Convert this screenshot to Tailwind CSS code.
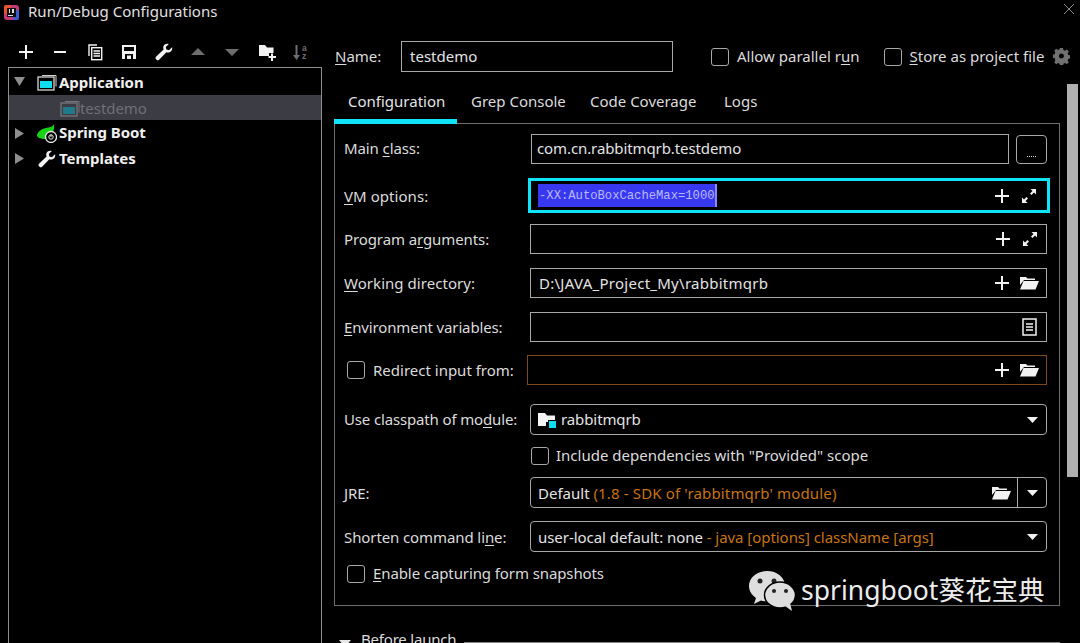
<!DOCTYPE html>
<html><head><meta charset="utf-8"><script src="https://cdn.jsdelivr.net/npm/@tailwindcss/browser@4"></script></head>
<body class="m-0 bg-black">
<div class="relative w-[1080px] h-[643px] overflow-hidden bg-black text-[#dcdcdc] text-[15px] leading-[20px] font-['Noto_Sans','Noto_Sans_CJK_SC',sans-serif]">
  <!-- title bar -->
  <div class="flex items-center h-[24px] pl-[4px]">
    <svg width="15" height="15" viewBox="0 0 15 15"><rect width="15" height="15" rx="3" fill="#c03a7a"/><rect x="0" y="0" width="7" height="9" rx="2" fill="#e8542a"/><rect x="9" y="5" width="6" height="10" rx="2" fill="#3a5ad0"/><rect x="3" y="3" width="9" height="9" fill="#111"/><rect x="4" y="10" width="5" height="1" fill="#ddd"/><rect x="5" y="4" width="1" height="4" fill="#ddd"/><rect x="8" y="4" width="2" height="4" fill="#ddd"/></svg>
    <span class="ml-[9px] text-[#e0e0e0] -translate-y-px tracking-[0.02px]">Run/Debug Configurations</span>
    <svg class="ml-auto mr-[5px] mt-[-6px]" width="12" height="12" viewBox="0 0 12 12" stroke="#8a8a8a" fill="none"><path d="M1 1L11 11M11 1L1 11"/></svg>
  </div>
  <div class="flex">
    <!-- left -->
    <div class="w-[334px] shrink-0 pl-[8px]">
      <div class="flex items-center h-[43px] pt-[12px] pl-[9px] gap-[16.4px]">
        <svg width="18" height="18" viewBox="0 0 18 18" fill="#f2f2f2"><path d="M8 2h2v6h6v2h-6v6H8v-6H2V8h6z"/></svg>
        <svg width="18" height="18" viewBox="0 0 18 18" fill="#f2f2f2"><path d="M3 8h12v2H3z"/></svg>
        <svg width="18" height="18" viewBox="0 0 18 18" fill="none" stroke="#f2f2f2" stroke-width="1.4"><path d="M3 13V2h8"/><rect x="5.7" y="4.7" width="10" height="12" fill="#000"/><path d="M7.5 8h6.5M7.5 10.5h6.5M7.5 13h6.5"/></svg>
        <svg width="18" height="18" viewBox="0 0 18 18" fill="#f2f2f2"><path d="M2 2h14v14H2z"/><rect x="4" y="4" width="10" height="4" fill="#000"/><rect x="5" y="11" width="8" height="5" fill="#000"/><rect x="7" y="12.500" width="4" height="3.500" fill="#f2f2f2"/></svg>
        <svg width="18" height="18" viewBox="0 0 18 18" fill="#f2f2f2"><path d="M17 4.200l-3 3-2.600-.6-.6-2.600 3-3c-2.400-.8-5 .3-5.500 2.800-.2 1-.1 1.900.3 2.700L1 13.800c-.6.7-.6 1.800.1 2.500l.5.500c.7.7 1.800.7 2.500 0l7.300-7.500c2.900 1 6.200-1 5.800-4.600z"/></svg>
        <svg width="18" height="18" viewBox="0 0 18 18" fill="#6e6e6e"><path d="M9 5l7 7H2z"/></svg>
        <svg width="18" height="18" viewBox="0 0 18 18" fill="#6e6e6e"><path d="M2 6h14l-7 7z"/></svg>
        <svg width="18" height="18" viewBox="0 0 18 18" fill="#f2f2f2"><path d="M1 2h6l2 2.500h6.500V10H11v3H1z"/><path d="M13 10.500h2v2.500h3v2h-3v3h-2v-3h-2.500v-2H13z"/></svg>
        <svg width="18" height="18" viewBox="0 0 18 18" fill="#6e6e6e"><path d="M3.500 2h2v10H8l-3.500 5L1 12h2.500z"/><text x="10" y="8" font-size="8.500" font-family="Liberation Sans" font-weight="700">a</text><text x="10" y="16" font-size="8.500" font-family="Liberation Sans" font-weight="700">z</text></svg>
      </div>
      <div class="w-[312px] h-[590px] border border-[#8e8e8e] font-bold text-[#f0f0f0] box-content tracking-[-0.05px]">
        <div class="flex items-center h-[27px]">
          <svg class="ml-[4px]" width="13" height="13" viewBox="0 0 13 13" fill="#8e8e8e"><path d="M1 2h11l-5.500 9z"/></svg>
          <svg class="ml-[11px]" width="20" height="18" viewBox="0 0 20 18"><path d="M5 2.500h14v11" fill="none" stroke="#cfcfcf"/><rect x="1" y="4" width="16" height="13" fill="#000" stroke="#d8d8d8" stroke-width="1.300"/><rect x="3" y="8" width="12" height="7" fill="#10dcf0"/></svg>
          <span class="ml-[2px]">Application</span>
        </div>
        <div class="flex items-center h-[25px] bg-[#3c3c44] font-normal text-[#6f6f76] pl-[51px]">
          <svg width="20" height="18" viewBox="0 0 20 18"><path d="M5 2.500h14v11" fill="none" stroke="#77777d"/><rect x="1" y="4" width="16" height="13" fill="#3c3c44" stroke="#77777d" stroke-width="1.300"/><rect x="3" y="8" width="12" height="7" fill="#1f7a8c"/></svg>
          <span>testdemo</span>
        </div>
        <div class="flex items-center h-[26px]">
          <svg class="ml-[4px]" width="13" height="13" viewBox="0 0 13 13" fill="#8e8e8e"><path d="M2 1l9 5.500-9 5.500z"/></svg>
          <svg class="ml-[11px]" width="20" height="20" viewBox="0 0 20 20"><path d="M0 13c0-4 4-7 9-8 3-.5 7-1 8-4 .5 4 0 8-3 10l-5 5c-4 0-7 0-9-3z" fill="#17d117"/><circle cx="14" cy="14" r="5.500" fill="#000" stroke="#e8e8e8" stroke-width="1.300"/><circle cx="14" cy="14" r="2.200" fill="none" stroke="#e8e8e8"/><path d="M14 11.500V14" stroke="#e8e8e8"/></svg>
          <span class="ml-[2px] -translate-y-px">Spring Boot</span>
        </div>
        <div class="flex items-center h-[25px]">
          <svg class="ml-[4px]" width="13" height="13" viewBox="0 0 13 13" fill="#8e8e8e"><path d="M2 1l9 5.500-9 5.500z"/></svg>
          <svg class="ml-[11px]" width="20" height="18" viewBox="0 0 18 18" fill="#f2f2f2"><path d="M17 4.200l-3 3-2.600-.6-.6-2.600 3-3c-2.400-.8-5 .3-5.500 2.800-.2 1-.1 1.900.3 2.700L1 13.800c-.6.7-.6 1.800.1 2.500l.5.500c.7.7 1.800.7 2.500 0l7.300-7.500c2.900 1 6.200-1 5.800-4.600z"/></svg>
          <span class="ml-[2px] -translate-y-px">Templates</span>
        </div>
      </div>
    </div>
    <!-- right -->
    <div class="w-[746px]">
      <div class="flex items-center h-[31px] mt-[17px]">
        <span class="w-[67px] pl-[1px] -translate-y-px"><span class="underline underline-offset-2">N</span>ame:</span>
        <div class="w-[272px] h-[31px] border border-[#a8a8a8] flex items-center pl-[8px] text-[#e4e4e4]"><span class="-translate-y-px">testdemo</span></div>
        <span class="ml-[38px] w-[18px] h-[18px] border border-[#a8a8a8] rounded-[3px]"></span>
        <span class="ml-[8px] -translate-y-px">Allow parallel r<span class="underline underline-offset-2">u</span>n</span>
        <span class="ml-[25px] w-[18px] h-[18px] border border-[#a8a8a8] rounded-[3px]"></span>
        <span class="ml-[7px] -translate-y-px"><span class="underline underline-offset-2">S</span>tore as project file</span>
        <svg class="ml-[9px] -translate-y-px" width="17" height="18" viewBox="0 0 17 18" fill="#707070"><path d="M7 1h3l.4 2 1.600.7 1.800-1.100 2 2-1.100 1.800.7 1.600 2 .4v3l-2 .4-.7 1.600 1.100 1.800-2 2-1.800-1.100-1.600.7-.4 2H7l-.4-2-1.600-.7-1.800 1.100-2-2 1.100-1.800L1.600 11l-2-.4v-3l2-.4.7-1.600L1.200 3.800l2-2L5 2.900l1.600-.7zM8.500 6.500a2.500 2.500 0 1 0 0 5 2.500 2.500 0 0 0 0-5z"/></svg>
      </div>
      <div class="flex">
        <div class="w-[726px] shrink-0">
          <div class="flex items-start h-[51px] relative pt-[19px]">
            <div class="w-[123px] pl-[14px] text-[#e4e4e4]">Configuration</div>
            <div class="w-[133px] pl-[14px]">Grep Console</div>
            <div class="w-[134px]">Code Coverage</div>
            <div>Logs</div>
            <div class="absolute left-0 bottom-[-1px] w-[123px] h-[5px] bg-[#10e4fa]"></div>
          </div>
          <div class="w-[726px] h-[483px] border border-[#6e6e6e] pl-[9px] flex flex-col tracking-[-0.1px]">
            <div class="flex items-center h-[30px] mt-[10px]">
              <span class="w-[187px] -translate-y-px">Main <span class="underline underline-offset-2">c</span>lass:</span>
              <div class="w-[478px] h-[30px] border border-[#a8a8a8] flex items-center pl-[5px] text-[#e4e4e4]"><span class="-translate-y-px">com.cn.rabbitmqrb.testdemo</span></div>
              <div class="ml-[7px] w-[31px] h-[29px] border border-[#a8a8a8] rounded-[4px] flex items-end justify-center pb-[6px]"><span class="w-[9px] h-[1px] border-b border-dotted border-[#ddd]"></span></div>
            </div>
            <div class="flex items-center h-[35px] mt-[14px]">
              <span class="w-[184px] tracking-[0.05px]"><span class="underline underline-offset-2">V</span>M options:</span>
              <div class="w-[522px] h-[35px] border-[3px] border-[#10e4fa] flex items-center pl-[7px] pr-[10px] tracking-normal">
                <span class="h-[23px] flex items-center bg-[#3838f0] border-r-2 border-[#8a8afa] text-[#b8b8ff] font-['Liberation_Mono',monospace] text-[12.2px] pl-[1px]">-XX:AutoBoxCacheMax=1000</span>
                <svg class="ml-auto" width="16" height="16" viewBox="0 0 16 16" fill="#f2f2f2"><path d="M7 1h2v6h6v2H9v6H7V9H1V7h6z"/></svg>
                <svg class="ml-[11px]" width="16" height="16" viewBox="0 0 16 16" fill="#f2f2f2"><path d="M9.500 1H15v5.500l-2-2L10.500 7 9 5.500 11.500 3zM6.500 15H1V9.500l2 2L5.500 9 7 10.500 4.500 13z"/></svg>
              </div>
            </div>
            <div class="flex items-center h-[30px] mt-[11px]">
              <span class="w-[186px]">Program a<span class="underline underline-offset-2">r</span>guments:</span>
              <div class="w-[517px] h-[30px] border border-[#a8a8a8] flex items-center pl-[8px] pr-[8px]">
                <svg class="ml-auto" width="16" height="16" viewBox="0 0 16 16" fill="#f2f2f2"><path d="M7 1h2v6h6v2H9v6H7V9H1V7h6z"/></svg>
                <svg class="ml-[11px]" width="16" height="16" viewBox="0 0 16 16" fill="#f2f2f2"><path d="M9.500 1H15v5.500l-2-2L10.500 7 9 5.500 11.500 3zM6.500 15H1V9.500l2 2L5.500 9 7 10.500 4.500 13z"/></svg>
              </div>
            </div>
            <div class="flex items-center h-[30px] mt-[14px]">
              <span class="w-[186px] tracking-[0.05px]"><span class="underline underline-offset-2">W</span>orking directory:</span>
              <div class="w-[517px] h-[30px] border border-[#a8a8a8] flex items-center pl-[8px] pr-[7px] text-[#e4e4e4]"><span class="tracking-[0.27px]">D:\JAVA_Project_My\rabbitmqrb</span>
                <svg class="ml-auto" width="16" height="16" viewBox="0 0 16 16" fill="#f2f2f2"><path d="M7 1h2v6h6v2H9v6H7V9H1V7h6z"/></svg>
                <svg class="ml-[9px]" width="20" height="16" viewBox="0 0 20 16" fill="#f2f2f2"><path d="M1 2h6l1.500 1.500H16V5H5L1 10zM4.500 6H20l-3.500 8.500H1z"/></svg>
              </div>
            </div>
            <div class="flex items-center h-[30px] mt-[14px]">
              <span class="w-[186px] tracking-[-0.15px]"><span class="underline underline-offset-2">E</span>nvironment variables:</span>
              <div class="w-[517px] h-[30px] border border-[#a8a8a8] flex items-center pr-[9px]">
                <svg class="ml-auto" width="15" height="18" viewBox="0 0 15 18" fill="none" stroke="#f2f2f2" stroke-width="1.500"><rect x="1" y="1" width="13" height="16"/><path d="M4 6h7M4 9h7M4 12h7" stroke="#b8b8b8" stroke-width="2"/></svg>
              </div>
            </div>
            <div class="flex items-center h-[30px] mt-[13px]">
              <span class="ml-[3px] w-[18px] h-[18px] border border-[#a8a8a8] rounded-[3px] shrink-0"></span>
              <span class="ml-[8px] w-[154px] tracking-normal">Redirect input from:</span>
              <div class="w-[520px] h-[30px] border border-[#7a4a18] flex items-center pr-[7px]">
                <svg class="ml-auto" width="16" height="16" viewBox="0 0 16 16" fill="#f2f2f2"><path d="M7 1h2v6h6v2H9v6H7V9H1V7h6z"/></svg>
                <svg class="ml-[9px]" width="20" height="16" viewBox="0 0 20 16" fill="#f2f2f2"><path d="M1 2h6l1.500 1.500H16V5H5L1 10zM4.500 6H20l-3.500 8.500H1z"/></svg>
              </div>
            </div>
            <div class="flex items-center h-[31px] mt-[19px]">
              <span class="w-[186px] -translate-y-px tracking-[-0.15px]">Use classpath of mo<span class="underline underline-offset-2">d</span>ule:</span>
              <div class="w-[517px] h-[31px] border border-[#a8a8a8] rounded-[4px] flex items-center pl-[6px] pr-[7px] text-[#e4e4e4]">
                <svg width="20" height="18" viewBox="0 0 20 18"><path d="M1 2h7l2 2.500h8V11h-9v4H1z" fill="#f4f4f4"/><rect x="11" y="9" width="8" height="8" fill="#000"/><rect x="12" y="10" width="7" height="7" fill="#10dcf0"/></svg>
                <span class="ml-[4px] -translate-y-px">rabbitmqrb</span>
                <svg class="ml-auto" width="13" height="8" viewBox="0 0 13 8" fill="#f2f2f2"><path d="M1 1h11L6.500 7z"/></svg>
              </div>
            </div>
            <div class="flex items-center h-[18px] mt-[12px] pl-[187px]">
              <span class="w-[18px] h-[18px] border border-[#a8a8a8] rounded-[3px] shrink-0"></span>
              <span class="ml-[7px] -translate-y-px tracking-normal">Include dependencies with "Provided" scope</span>
            </div>
            <div class="flex items-center h-[31px] mt-[12px]">
              <span class="w-[186px]"><span class="underline underline-offset-2">J</span>RE:</span>
              <div class="w-[517px] h-[31px] border border-[#a8a8a8] rounded-[4px] flex items-center pl-[7px] text-[#e4e4e4] tracking-normal">Default&nbsp;<span class="text-[#c87414] tracking-[0.15px]">(1.8 - SDK of 'rabbitmqrb' module)</span>
                <svg class="ml-auto" width="20" height="16" viewBox="0 0 20 16" fill="#f2f2f2"><path d="M1 2h6l1.500 1.500H16V5H5L1 10zM4.500 6H20l-3.500 8.500H1z"/></svg>
                <div class="ml-[6px] w-[29px] h-full border-l border-[#a8a8a8] flex items-center pl-[8px]"><svg width="13" height="8" viewBox="0 0 13 8" fill="#f2f2f2"><path d="M1 1h11L6.500 7z"/></svg></div>
              </div>
            </div>
            <div class="flex items-center h-[31px] mt-[13px]">
              <span class="w-[186px]">Shorten command li<span class="underline underline-offset-2">n</span>e:</span>
              <div class="w-[517px] h-[31px] border border-[#a8a8a8] rounded-[4px] flex items-center pl-[7px] pr-[7px] text-[#e4e4e4] tracking-[-0.05px]">user-local default: none&nbsp;<span class="text-[#c87414]">- java [options] className [args]</span>
                <svg class="ml-auto" width="13" height="8" viewBox="0 0 13 8" fill="#f2f2f2"><path d="M1 1h11L6.500 7z"/></svg>
              </div>
            </div>
            <div class="flex items-center h-[18px] mt-[13px]">
              <span class="ml-[3px] w-[18px] h-[18px] border border-[#a8a8a8] rounded-[3px] shrink-0"></span>
              <span class="ml-[8px] -translate-y-px"><span class="underline underline-offset-2">E</span>nable capturing form snapshots</span>
            </div>
          </div>
          <div class="flex items-start h-[20px] mt-[24px] pl-[5px]">
            <svg class="mt-[10px]" width="12" height="8" viewBox="0 0 12 8" fill="#e8e8e8"><path d="M0 0h12L6 7z"/></svg>
            <span class="ml-[10px] shrink-0 tracking-[-0.2px] -translate-y-px">Before launch</span>
            <span class="ml-[8px] mt-[12px] grow h-[2px] bg-[#8a8a8a]"></span>
          </div>
        </div>
        <div class="ml-[7px] mt-[12px] w-[11px] h-[393px] bg-[#b0b0b0]"></div>
      </div>
    </div>
  </div>
  <!-- watermark overlay -->
  <div class="absolute left-[748px] top-[568px] flex items-center">
    <svg width="48" height="44" viewBox="0 0 48 44"><path d="M19 3C9 3 1 9.500 1 18c0 5 2.800 9 7 12l-2 6 7-3.500c2 .6 4 .8 6 .8 10 0 18-6.500 18-15.300S29 3 19 3z" fill="#dedede"/><circle cx="12" cy="13" r="2.500" fill="#222"/><circle cx="26" cy="13" r="2.500" fill="#222"/><ellipse cx="32" cy="27" rx="15.500" ry="13" fill="#dedede" stroke="#000" stroke-width="1.500"/><path d="M37 38l7 5-2-8z" fill="#dedede"/><circle cx="26" cy="23" r="2" fill="#222"/><circle cx="38" cy="23" r="2" fill="#222"/></svg>
    <span class="ml-[5px] text-[26.5px] leading-[36px] text-[#ececec] whitespace-nowrap">springboot葵花宝典</span>
  </div>
</div>
</body></html>
